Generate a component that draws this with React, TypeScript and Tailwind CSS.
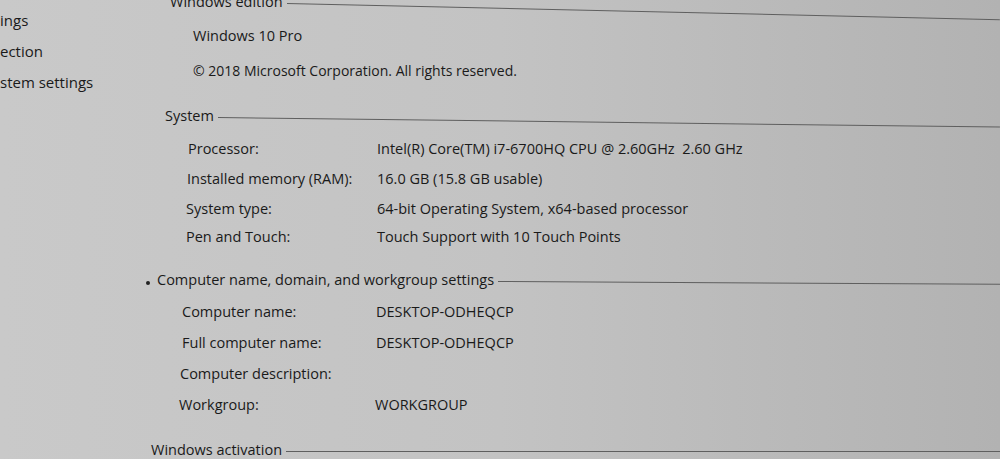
import React from "react";

const font = { fontFamily: '"Open Sans", "Noto Sans", sans-serif' };

const Heading = ({ title, className, lineClass }: { title: string; className?: string; lineClass?: string }) => (
    <div className={`flex h-[20px] items-center gap-1 ${className ?? ""}`}>
        <span className="whitespace-nowrap">{title}</span>
        <div className={`mt-[3px] h-px flex-1 origin-left bg-[#5f5f5f] ${lineClass ?? ""}`} />
    </div>
);

const Row = ({ label, value, labelW, className }: { label: string; value?: string; labelW: string; className?: string }) => (
    <div className={`flex h-[20px] items-center ${className ?? ""}`}>
        <span className={`${labelW} shrink-0 whitespace-nowrap`}>{label}</span>
        <span className="whitespace-pre">{value}</span>
    </div>
);

export default function App() {
    return (
        <div
            style={font}
            className="flex h-[459px] w-[1000px] overflow-hidden bg-gradient-to-r from-[#c9c9c9] via-[#c3c3c3] to-[#b2b2b2] text-[14.5px] text-[#1a1a1a]"
        >
            {/* Left nav, cut off by the window edge */}
            <nav className="flex w-[140px] shrink-0 flex-col text-[15px]">
                <div className="mt-[10px] flex h-[20px] items-center">ings</div>
                <div className="mt-[11px] flex h-[20px] items-center">ection</div>
                <div className="mt-[11px] flex h-[20px] items-center">stem settings</div>
            </nav>

            <main className="flex flex-1 flex-col">
                {/* Windows edition */}
                <Heading title="Windows edition" className="mt-[-8px] pl-[30px]" lineClass="rotate-[1.3deg]" />
                <div className="mt-[14px] flex h-[20px] items-center pl-[53px]">Windows 10 Pro</div>
                <div className="mt-[14px] flex h-[20px] items-center pl-[53px] text-[14px]">
                    © 2018 Microsoft Corporation. All rights reserved.
                </div>

                {/* System */}
                <Heading title="System" className="mt-[26px] pl-[25px]" lineClass="rotate-[0.7deg]" />
                <div className="flex flex-col pl-[48px]">
                    <Row className="mt-[13px]" labelW="w-[189px]" label="Processor:" value="Intel(R) Core(TM) i7-6700HQ CPU @ 2.60GHz  2.60 GHz" />
                    <Row className="mt-[10px] -ml-px" labelW="w-[190px]" label="Installed memory (RAM):" value="16.0 GB (15.8 GB usable)" />
                    <Row className="mt-[10px] -ml-[2px]" labelW="w-[191px]" label="System type:" value="64-bit Operating System, x64-based processor" />
                    <Row className="mt-[8px] -ml-[2px]" labelW="w-[191px]" label="Pen and Touch:" value="Touch Support with 10 Touch Points" />
                </div>

                {/* Computer name */}
                <div className="mt-[23px] flex items-center gap-[7px] pl-[6px]">
                    <div className="mt-[6px] h-[4px] w-[4px] rounded-full bg-[#222]" />
                    <Heading title="Computer name, domain, and workgroup settings" className="flex-1" lineClass="rotate-[0.3deg]" />
                </div>
                <div className="flex flex-col pl-[42px]">
                    <Row className="mt-[12px]" labelW="w-[194px]" label="Computer name:" value="DESKTOP-ODHEQCP" />
                    <Row className="mt-[11px]" labelW="w-[194px]" label="Full computer name:" value="DESKTOP-ODHEQCP" />
                    <Row className="mt-[11px] -ml-[2px]" labelW="w-[196px]" label="Computer description:" />
                    <Row className="mt-[11px] -ml-[3px]" labelW="w-[196px]" label="Workgroup:" value="WORKGROUP" />
                </div>

                {/* Windows activation */}
                <Heading title="Windows activation" className="mt-[25px] pl-[11px]" />
            </main>
        </div>
    );
}
